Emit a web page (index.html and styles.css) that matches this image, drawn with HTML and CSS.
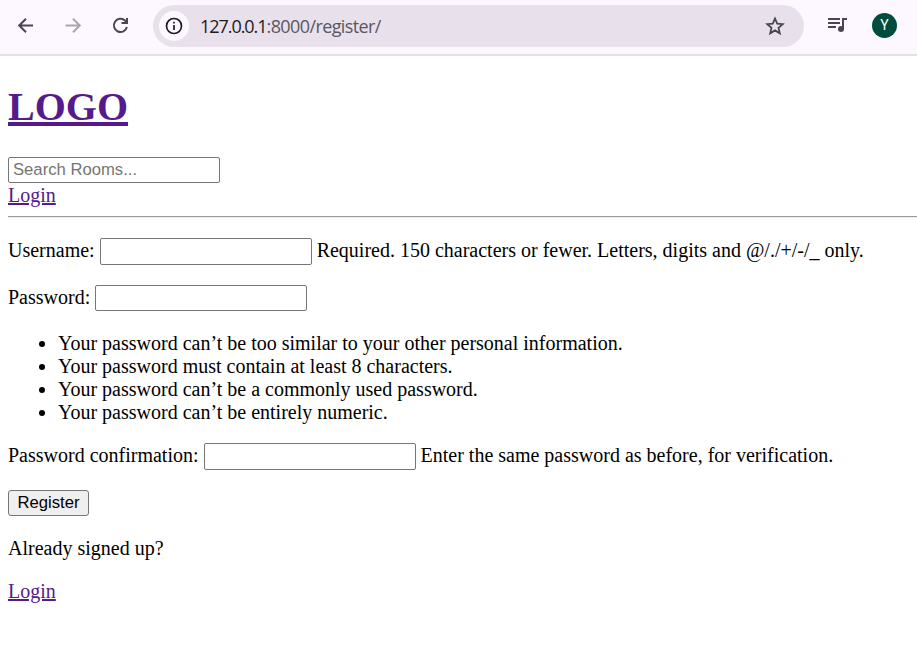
FILE: index.html
```
<!DOCTYPE html>
<html lang="en">
<head>
<meta charset="utf-8">
<title>Register</title>
<link rel="stylesheet" href="styles.css">
</head>
<body>
<header class="toolbar">
  <div class="nav">
    <svg width="24" height="24" viewBox="0 0 24 24" class="icon"><path d="M19 12.500H5.500M12 5.700L5.200 12.500l6.800 6.800"/></svg>
    <svg width="24" height="24" viewBox="0 0 24 24" class="icon dim"><path d="M4.500 12.500h14M12 5.700L18.800 12.500 12 19.300"/></svg>
    <svg width="24" height="24" viewBox="0 0 24 24" class="icon"><path d="M18.900 14A6.600 6.600 0 1 1 17 7.600L19 9.700"/><path class="solid" d="M18 5h2v6h-6.500V9H18z"/></svg>
  </div>
  <div class="address">
    <span class="info"><svg width="20" height="20" viewBox="0 0 20 20" class="icon dark"><circle cx="10" cy="10" r="7.500"/><path d="M10 9v5M10 5.800v1.800"/></svg></span>
    <span class="url"><span class="host">127.0.0.1</span><span class="path">:8000/register/</span></span>
    <svg width="22" height="22" viewBox="0 0 22 22" class="icon star"><path d="M11 3.500l2.200 5.200 5.500.5-4.200 3.600 1.300 5.500L11 15.400l-4.800 2.900 1.300-5.500-4.200-3.600 5.500-.5z"/></svg>
  </div>
  <svg width="22" height="20" viewBox="0 0 22 20" class="icon media"><path d="M0 4h12M0 8h12M0 12h8M15 14V4H19"/><circle class="solid" cx="13" cy="14" r="3"/></svg>
  <span class="avatar">Y</span>
</header>
<main class="page">
  <h1><a href="#">LOGO</a></h1>
  <form class="search"><input class="short" type="text" placeholder="Search Rooms..."></form>
  <a href="#">Login</a>
  <hr>
  <form>
    <p>Username: <input type="text"> Required. 150 characters or fewer. Letters, digits and @/./+/-/_ only.</p>
    <p>Password: <input class="short low" type="password"></p>
    <ul>
      <li>Your password can’t be too similar to your other personal information.</li>
      <li>Your password must contain at least 8 characters.</li>
      <li>Your password can’t be a commonly used password.</li>
      <li>Your password can’t be entirely numeric.</li>
    </ul>
    <p>Password confirmation: <input type="password"> Enter the same password as before, for verification.</p>
    <button type="button">Register</button>
  </form>
  <p class="prompt">Already signed up?</p>
  <a href="#">Login</a>
</main>
</body>
</html>
```
FILE: styles.css
```
* { box-sizing: border-box; }
body { margin: 0; background: #fff; color: #000; font: 20px/23px "Liberation Serif", serif; overflow: hidden; }
.toolbar { display: flex; align-items: center; height: 56px; padding: 0 20px 4px 14px; background: #fdf7ff; border-bottom: 2px solid #e6e0e9; }
.nav { display: flex; gap: 23px; width: 139px; flex: none; }
.icon { display: block; flex: none; fill: none; stroke: #4b4453; stroke-width: 2; }
.dim { stroke: #aaa6ad; }
.dark { stroke: #1d1b20; stroke-width: 1.700; }
.solid { fill: #4b4453; stroke: none; }
.address { display: flex; align-items: center; width: 651px; height: 42px; margin-top: 1px; padding: 0 18px 0 6px; border-radius: 21px; background: #e8e1ec; flex: none; }
.info { display: grid; place-items: center; width: 30px; height: 30px; border-radius: 50%; background: #fdf7ff; }
.url { margin: 1px 0 0 11px; font: 18px "Open Sans", sans-serif; color: #1d1b20; }
.host { letter-spacing: -1.05px; }
.path { color: #5a575f; letter-spacing: -0.6px; }
.star { margin-left: auto; stroke: #47464b; stroke-width: 1.8; }
.media { margin-left: 24px; }
.avatar { display: grid; place-items: center; margin-left: auto; width: 25px; height: 25px; border-radius: 50%; background: #004d40; color: #fff; font: 14px Roboto, sans-serif; }
.page { padding-left: 8px; }
h1 { margin: 27px 0; font-size: 40px; line-height: 47px; }
a { color: #551a8b; }
input { width: 212px; height: 27px; padding: 1px 4px; border: 1px solid #767676; border-radius: 2px; font: 16.667px "Liberation Sans", sans-serif; }
.short { height: 26px; }
.low { padding: 3px 4px 1px; }
.search { height: 26px; margin-bottom: 1px; display: flex; }
hr { margin: 9px 0 20px; border: 0; border-top: 1px solid #9a9a9a; border-bottom: 1px solid #eee; }
p { margin: 20px 0; }
ul { margin: 21px 0 19px; padding-left: 50px; }
ul + p { margin-top: 20px; }
form > ul { margin-bottom: -1px; padding-bottom: 0; }
button { display: block; width: 81px; height: 26px; padding: 0; border: 1px solid #767676; border-radius: 3px; background: #efefef; color: #000; font: 16.667px "Liberation Sans", sans-serif; }
.prompt { margin-top: 21px; }
```
